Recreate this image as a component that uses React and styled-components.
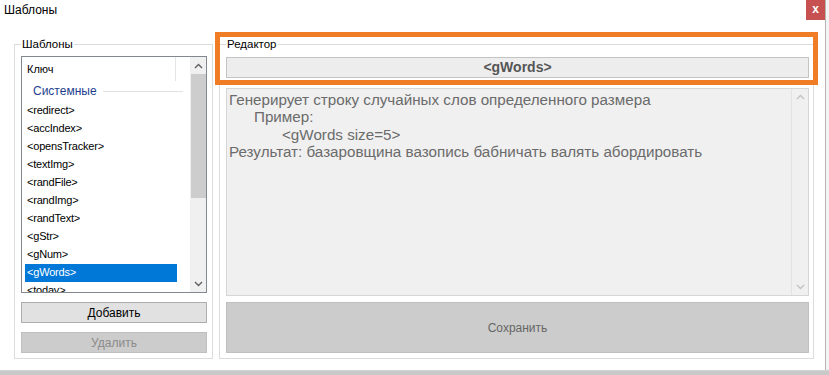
import React from 'react';
import styled, { createGlobalStyle } from 'styled-components';

const Global = createGlobalStyle`
  html, body { margin: 0; padding: 0; }
  body {
    width: 829px; height: 375px; overflow: hidden;
    background: #cdcdcd;
    font-family: "Liberation Sans", Arial, sans-serif;
  }
`;

const Screen = styled.div`
  width: 829px;
  height: 375px;
  display: flex;
  align-items: flex-start;
  background: linear-gradient(to bottom, #f4f4f4 0, #f4f4f4 369px, #c9c9c9 371px);
`;

const Window = styled.div`
  width: 826px;
  height: 370px;
  background: #ffffff;
  border-right: 1px solid #b5b5b5;
  box-sizing: border-box;
  display: flex;
  flex-direction: column;
`;

const TitleBar = styled.div`
  height: 24px;
  display: flex;
  justify-content: space-between;
  align-items: flex-start;
`;

const Title = styled.div`
  padding-left: 4px;
  font-size: 12px;
  line-height: 20px;
  color: #000;
`;

const CloseBtn = styled.div`
  width: 19px;
  height: 20px;
  background: #c75050;
  color: #fff;
  font-size: 12px;
  font-weight: bold;
  line-height: 19px;
  text-align: center;
`;

const Content = styled.div`
  display: flex;
  gap: 6px;
  padding: 13px 0 0 14px;
`;

const Group = styled.fieldset`
  margin: 0;
  box-sizing: border-box;
  width: ${p => p.$w}px;
  height: 322px;
  border: 1px solid #dcdcdc;
  padding: 5px ${p => p.$pr}px 5px ${p => p.$pl}px;
  display: flex;
  flex-direction: column;
  min-width: 0;
`;

const Legend = styled.legend`
  font-size: 11.5px;
  line-height: 14px;
  padding: 0 1px;
  margin-left: 0;
  color: #000;
`;

const ListBox = styled.div`
  height: 237px;
  border: 1px solid #828790;
  box-sizing: border-box;
  display: flex;
  overflow: hidden;
`;

const ListBody = styled.div`
  flex: 1;
  display: flex;
  flex-direction: column;
  overflow: hidden;
`;

const HeaderRow = styled.div`
  height: 24px;
  flex-shrink: 0;
  display: flex;
`;

const HeaderCell = styled.div`
  width: 154px;
  border-right: 1px solid #e5e5e5;
  font-size: 11px;
  line-height: 24px;
  padding-left: 5px;
  box-sizing: border-box;
`;

const GroupHeader = styled.div`
  height: 20px;
  flex-shrink: 0;
  display: flex;
  align-items: center;
  gap: 6px;
  padding-left: 11px;
  padding-right: 7px;
  font-size: 12px;
  color: #1e3f8f;
  margin-bottom: 1px;
  &::after {
    content: "";
    flex: 1;
    height: 1px;
    background: #e2e2e2;
  }
`;

const Item = styled.div`
  flex-shrink: 0;
  height: 18px;
  width: 152px;
  margin-left: 3px;
  padding-left: 2px;
  box-sizing: border-box;
  font-size: 11px;
  line-height: 17px;
  letter-spacing: -0.2px;
  color: ${p => (p.$sel ? '#fff' : '#000')};
  background: ${p => (p.$sel ? '#0078d7' : 'transparent')};
`;

const VScroll = styled.div`
  width: 16px;
  flex-shrink: 0;
  background: ${p => p.$bg};
  border-left: ${p => (p.$line ? '1px solid #e3e3e3' : 'none')};
  display: flex;
  flex-direction: column;
  align-items: center;
`;

const Arrow = styled.div`
  height: 17px;
  flex-shrink: 0;
  display: flex;
  align-items: center;
  justify-content: center;
`;

const Thumb = styled.div`
  width: 15px;
  height: ${p => p.$h}px;
  background: #cdcdcd;
  flex-shrink: 0;
`;

const Spacer = styled.div`
  flex: 1;
`;

const Button = styled.div`
  flex-shrink: 0;
  height: ${p => p.$h}px;
  margin-top: ${p => p.$mt}px;
  box-sizing: border-box;
  border: 1px solid ${p => (p.$disabled ? '#bfbfbf' : '#adadad')};
  background: ${p => (p.$disabled ? '#cccccc' : '#e1e1e1')};
  color: ${p => p.$color || (p.$disabled ? '#8a8a8a' : '#000')};
  font-size: 12px;
  display: flex;
  align-items: center;
  justify-content: center;
`;

const RightWrap = styled.div`
  position: relative;
`;

const TitleField = styled.div`
  height: 21px;
  box-sizing: border-box;
  border: 1px solid #c4c4c4;
  background: #ededed;
  color: #555;
  font-weight: bold;
  font-size: 14px;
  display: flex;
  align-items: center;
  justify-content: center;
  margin-top: 1px;
`;

const TextBox = styled.div`
  margin-top: 10px;
  height: 209px;
  box-sizing: border-box;
  border: 1px solid #d6d6d6;
  background: #f0f0f0;
  display: flex;
`;

const TextContent = styled.div`
  flex: 1;
  padding: 2px 2px;
  color: #6b6b6b;
  font-size: 15.2px;
  line-height: 17.3px;
`;

const Line = styled.div`
  padding-left: ${p => p.$indent || 0}px;
  white-space: nowrap;
`;

const Highlight = styled.div`
  position: absolute;
  left: -4px;
  top: -5px;
  width: 603px;
  height: 53px;
  box-sizing: border-box;
  border: 5px solid #f07d26;
  pointer-events: none;
`;

const Up = ({ c = '#606060' }) => (
  <svg width="9" height="6" viewBox="0 0 9 6"><path d="M1 5 L4.5 1.5 L8 5" fill="none" stroke={c} strokeWidth="1.4" /></svg>
);
const Down = ({ c = '#606060' }) => (
  <svg width="9" height="6" viewBox="0 0 9 6"><path d="M1 1 L4.5 4.5 L8 1" fill="none" stroke={c} strokeWidth="1.4" /></svg>
);

const items = ['<redirect>', '<accIndex>', '<opensTracker>', '<textImg>', '<randFile>', '<randImg>', '<randText>', '<gStr>', '<gNum>', '<gWords>', '<today>'];

export default function App() {
  return (
    <Screen>
      <Global />
      <Window>
        <TitleBar>
          <Title>Шаблоны</Title>
          <CloseBtn>x</CloseBtn>
        </TitleBar>
        <Content>
          <Group $w={199} $pl={6} $pr={5}>
            <Legend>Шаблоны</Legend>
            <ListBox>
              <ListBody>
                <HeaderRow><HeaderCell>Ключ</HeaderCell></HeaderRow>
                <GroupHeader>Системные</GroupHeader>
                {items.map(t => (
                  <Item key={t} $sel={t === '<gWords>'}>{t}</Item>
                ))}
              </ListBody>
              <VScroll $bg="#f0f0f0">
                <Arrow><Up /></Arrow>
                <Thumb $h={124} />
                <Spacer />
                <Arrow><Down /></Arrow>
              </VScroll>
            </ListBox>
            <Button $h={21} $mt={9}>Добавить</Button>
            <Button $h={21} $mt={9} $disabled>Удалить</Button>
          </Group>
          <RightWrap>
            <Group $w={595} $pl={6} $pr={4}>
              <Legend>Редактор</Legend>
              <TitleField>&lt;gWords&gt;</TitleField>
              <TextBox>
                <TextContent>
                  <Line>Генерирует строку случайных слов определенного размера</Line>
                  <Line $indent={25}>Пример:</Line>
                  <Line $indent={53}>&lt;gWords size=5&gt;</Line>
                  <Line>Результат: базаровщина вазопись бабничать валять абордировать</Line>
                </TextContent>
                <VScroll $bg="#f0f0f0" $line>
                  <Arrow><Up c="#c2c2c2" /></Arrow>
                  <Spacer />
                  <Arrow><Down c="#c2c2c2" /></Arrow>
                </VScroll>
              </TextBox>
              <Button $h={51} $mt={6} $disabled $color="#666">Сохранить</Button>
            </Group>
            <Highlight />
          </RightWrap>
        </Content>
      </Window>
    </Screen>
  );
}
